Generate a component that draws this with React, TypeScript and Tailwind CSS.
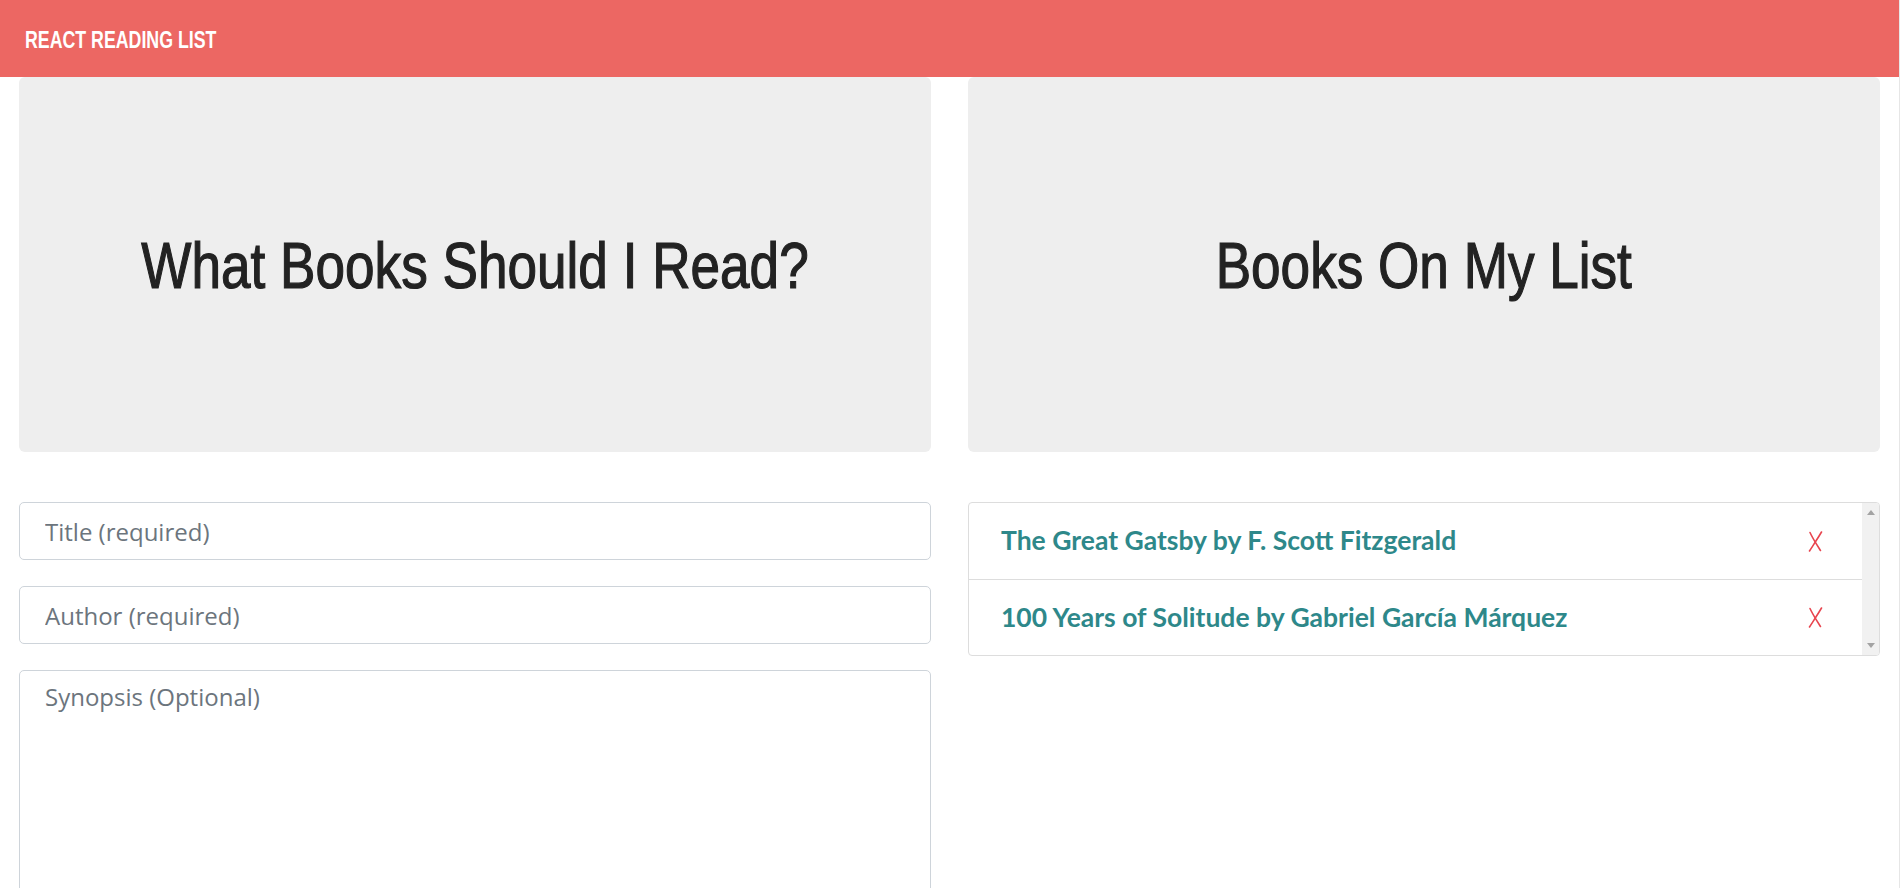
const books = [
  { title: "The Great Gatsby", author: "F. Scott Fitzgerald" },
  { title: "100 Years of Solitude", author: "Gabriel García Márquez" },
];

function RemoveMark() {
  return (
    <svg width="15" height="21" viewBox="0 0 15 21" fill="none">
      <path d="M13.5 1 C10 7, 6 13, 1.5 20" stroke="#e8454f" strokeWidth="1.6" strokeLinecap="round" />
      <path d="M2 1.5 C5 8, 9 14, 12.5 19.5" stroke="#e8454f" strokeWidth="1.6" strokeLinecap="round" />
    </svg>
  );
}

function Jumbotron({ text }: { text: string }) {
  return (
    <div className="h-[375px] bg-[#eeeeee] rounded-[6px] flex items-center justify-center">
      <h1 className="font-['Liberation_Sans',Arial,sans-serif] text-[64px] leading-none text-[#222222] pt-[2px] whitespace-nowrap scale-x-[0.83] [-webkit-text-stroke:1.2px_#222222]">
        {text}
      </h1>
    </div>
  );
}

export default function App() {
  return (
    <div className="min-h-screen w-full bg-white border-r border-[#e6e6e6] font-['Open_Sans',sans-serif]">
      <header className="h-[77px] bg-[#ec6763] flex items-center px-[25px]">
        <span className="font-['Liberation_Sans',Arial,sans-serif] font-bold text-white text-[24px] pt-[3px] whitespace-nowrap origin-left scale-x-[0.74]">
          REACT READING LIST
        </span>
      </header>

      <main className="grid grid-cols-2 gap-[37px] px-[19px]">
        <section className="flex flex-col">
          <Jumbotron text="What Books Should I Read?" />

          <form className="mt-[50px] flex flex-col gap-[26px]">
            <input
              placeholder="Title (required)"
              className="h-[58px] border border-[#ced4da] rounded-[5px] px-[25px] text-[24px] text-[#495057] placeholder:text-[#6c757d] outline-none"
            />
            <input
              placeholder="Author (required)"
              className="h-[58px] border border-[#ced4da] rounded-[5px] px-[25px] text-[24px] text-[#495057] placeholder:text-[#6c757d] outline-none"
            />
            <textarea
              placeholder="Synopsis (Optional)"
              className="h-[300px] border border-[#ced4da] rounded-[5px] px-[25px] py-[8px] text-[24px] text-[#495057] placeholder:text-[#6c757d] outline-none resize-none"
            />
          </form>
        </section>

        <section className="flex flex-col">
          <Jumbotron text="Books On My List" />

          <div className="mt-[50px] border border-[#dddddd] rounded-[4px] flex overflow-hidden">
            <ul className="flex-1">
              {books.map((b, i) => (
                <li
                  key={b.title}
                  className={`h-[76px] flex items-center justify-between pl-[32px] pr-[39px] ${i > 0 ? "border-t border-[#dddddd]" : ""}`}
                >
                  <span className="font-['Lato',sans-serif] font-bold text-[26.5px] text-[#2e888a]">
                    {b.title} by {b.author}
                  </span>
                  <RemoveMark />
                </li>
              ))}
            </ul>
            <div className="w-[17px] bg-[#f1f1f1] flex flex-col items-center justify-between py-[7px]">
              <span className="w-0 h-0 border-x-[4px] border-x-transparent border-b-[5px] border-b-[#a3a3a3]" />
              <span className="w-0 h-0 border-x-[4px] border-x-transparent border-t-[5px] border-t-[#a3a3a3]" />
            </div>
          </div>
        </section>
      </main>
    </div>
  );
}
